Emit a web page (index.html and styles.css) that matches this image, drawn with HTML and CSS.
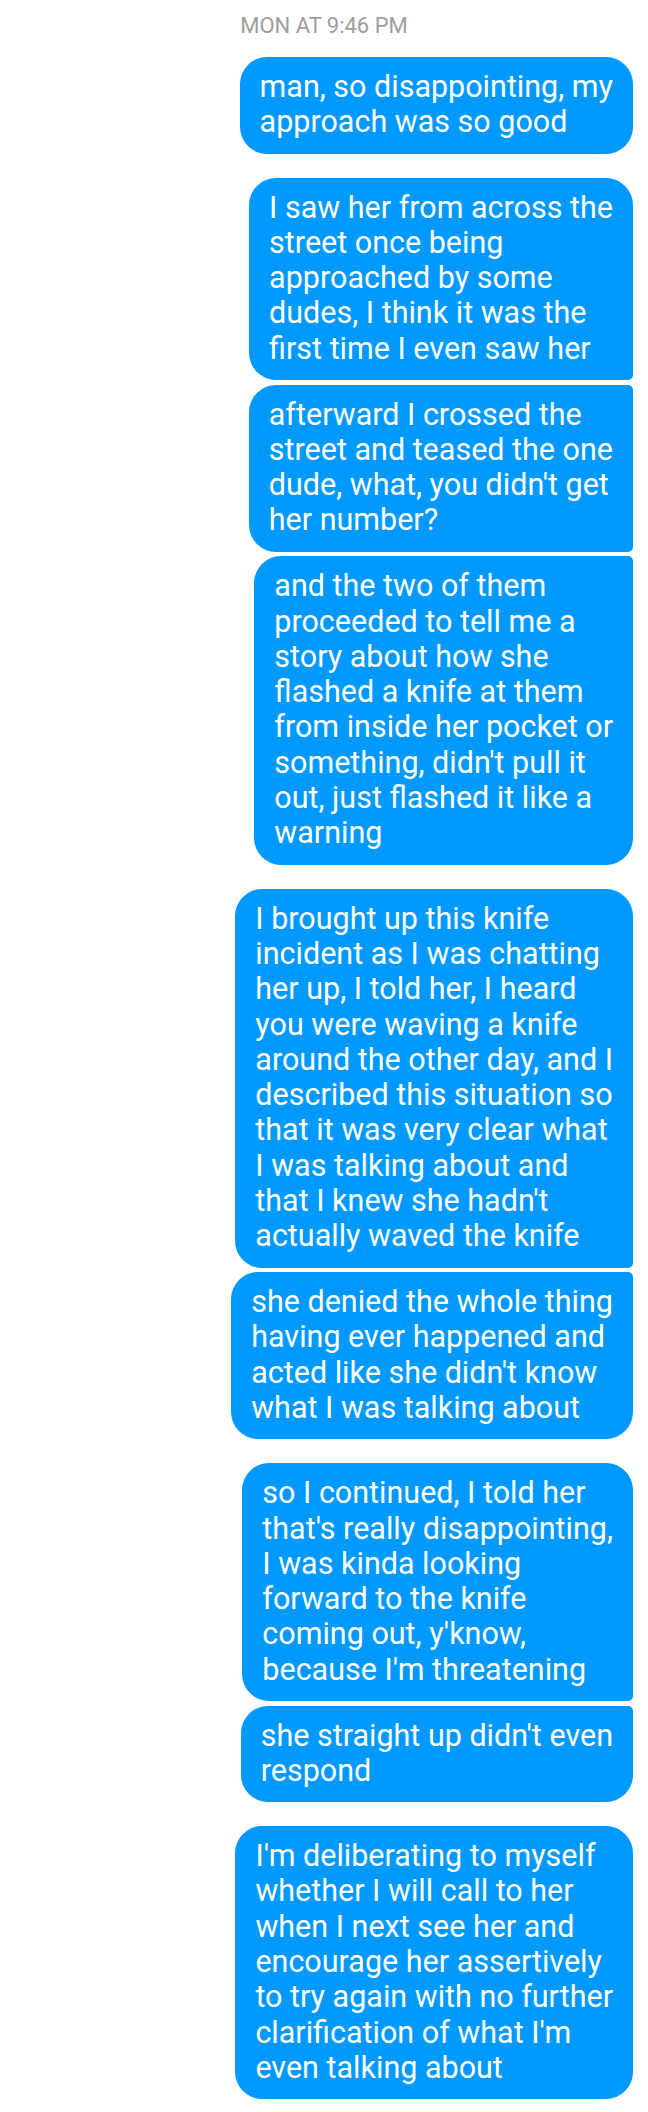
FILE: index.html
```html
<!DOCTYPE html>
<html lang="en">
<head>
<meta charset="utf-8">
<title>Messages</title>
<link rel="stylesheet" href="styles.css">
</head>
<body>
<main class="thread">
  <div class="timestamp">MON AT 9:46 PM</div>

  <div class="group">
    <div class="bubble solo">man, so disappointing, my<br>approach was so good</div>
  </div>

  <div class="group">
    <div class="bubble first">I saw her from across the<br>street once being<br>approached by some<br>dudes, I think it was the<br>first time I even saw her</div>
    <div class="bubble middle">afterward I crossed the<br>street and teased the one<br>dude, what, you didn't get<br>her number?</div>
    <div class="bubble last">and the two of them<br>proceeded to tell me a<br>story about how she<br>flashed a knife at them<br>from inside her pocket or<br>something, didn't pull it<br>out, just flashed it like a<br>warning</div>
  </div>

  <div class="group">
    <div class="bubble first">I brought up this knife<br>incident as I was chatting<br>her up, I told her, I heard<br>you were waving a knife<br>around the other day, and I<br>described this situation so<br>that it was very clear what<br>I was talking about and<br>that I knew she hadn't<br>actually waved the knife</div>
    <div class="bubble last">she denied the whole thing<br>having ever happened and<br>acted like she didn't know<br>what I was talking about</div>
  </div>

  <div class="group">
    <div class="bubble first">so I continued, I told her<br>that's really disappointing,<br>I was kinda looking<br>forward to the knife<br>coming out, y'know,<br>because I'm threatening</div>
    <div class="bubble last">she straight up didn't even<br>respond</div>
  </div>

  <div class="group">
    <div class="bubble solo">I'm deliberating to myself<br>whether I will call to her<br>when I next see her and<br>encourage her assertively<br>to try again with no further<br>clarification of what I'm<br>even talking about</div>
  </div>
</main>
</body>
</html>
```

FILE: styles.css
```css
html, body {
  margin: 0;
  padding: 0;
  background: #ffffff;
}

body {
  font-family: Roboto, "Noto Sans", "Liberation Sans", sans-serif;
  -webkit-font-smoothing: antialiased;
}

.thread {
  display: flex;
  flex-direction: column;
  gap: 24px;
  padding: 0 15px 0 0;
}

.timestamp {
  text-align: center;
  padding-top: 13px;
  padding-left: 15px;
  margin-bottom: -6px;
  font-size: 22px;
  line-height: 26px;
  color: #9e9e9e;
}

.group {
  display: flex;
  flex-direction: column;
  align-items: flex-end;
  gap: 4.5px;
}

.bubble {
  background: #0099ff;
  color: #ffffff;
  font-size: 30.5px;
  line-height: 35.3px;
  padding: 12px 20px 14px 20px;
  border-radius: 27px;
  white-space: nowrap;
}

.bubble.first {
  border-bottom-right-radius: 5px;
}

.bubble.middle {
  border-top-right-radius: 5px;
  border-bottom-right-radius: 5px;
}

.bubble.last {
  border-top-right-radius: 5px;
}
```
